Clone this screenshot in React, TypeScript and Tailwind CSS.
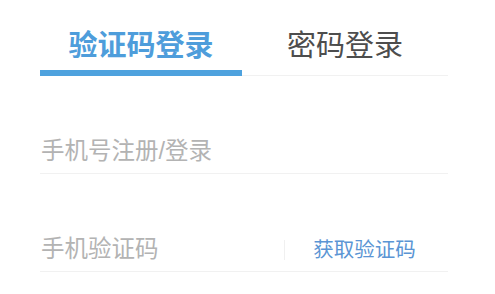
import React, { useState } from 'react';

export default function App() {
  const [tab, setTab] = useState<'sms' | 'pwd'>('sms');

  return (
    <div className="min-h-[294px] w-[495px] bg-white font-['Liberation_Sans','Noto_Sans_CJK_SC',sans-serif]">
      <div className="ml-[40px] w-[408px]">
        {/* tabs */}
        <div className="flex border-b border-[#f1f1f1]">
          <button
            onClick={() => setTab('sms')}
            className={`-mb-px h-[76px] w-[202px] border-b-[6px] pt-[22px] text-center text-[29px] leading-[29px] ${
              tab === 'sms' ? 'border-[#4ea2de] font-bold text-[#4e9ddb]' : 'border-transparent text-[#4d4d4d]'
            }`}
          >
            验证码登录
          </button>
          <button
            onClick={() => setTab('pwd')}
            className={`-mb-px h-[76px] flex-1 border-b-[6px] pt-[22px] text-center text-[29px] leading-[29px] ${
              tab === 'pwd' ? 'border-[#4ea2de] font-bold text-[#4e9ddb]' : 'border-transparent text-[#4d4d4d]'
            }`}
          >
            密码登录
          </button>
        </div>

        {/* phone */}
        <div className="mt-[54px] flex h-[44px] items-center border-b border-[#f1f1f1]">
          <input
            className="w-full bg-transparent pl-[1px] text-[23.5px] leading-[24px] text-[#333] outline-none placeholder:text-[#b3b3b3]"
            placeholder="手机号注册/登录"
          />
        </div>

        {/* code */}
        <div className="mt-[54px] flex h-[44px] items-center border-b border-[#f1f1f1]">
          <input
            className="min-w-0 flex-1 bg-transparent pl-[1px] text-[23.5px] leading-[24px] text-[#333] outline-none placeholder:text-[#b3b3b3]"
            placeholder="手机验证码"
          />
          <div className="flex h-[20px] w-[164px] items-center justify-center border-l border-[#f0f0f0] pr-[4px]">
            <span className="text-[20.5px] leading-[20px] text-[#5b95d4]">获取验证码</span>
          </div>
        </div>
      </div>
    </div>
  );
}
